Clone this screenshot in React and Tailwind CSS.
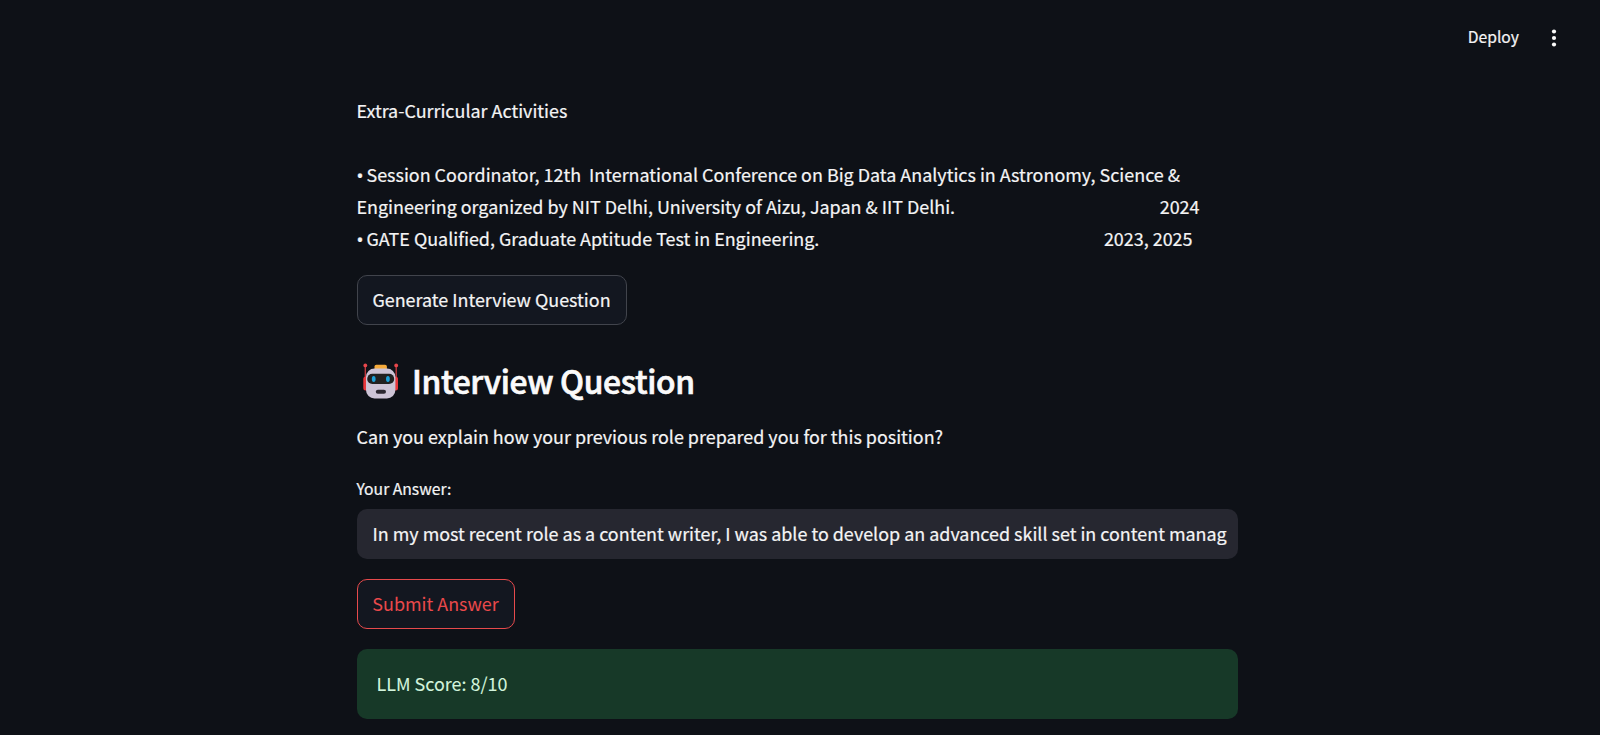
const robotLabel = 'robot';

function Robot() {
  return (
    <svg className="ml-[5px] h-[37px] w-[38px] shrink-0" viewBox="0 0 38 37" role="img" aria-label={robotLabel}>
      <path d="M3.3 3v14M34.2 3v14" stroke="#c93a3f" strokeWidth="1.3" />
      <circle cx="3.3" cy="2.4" r="1.9" fill="#e8474c" />
      <circle cx="34.2" cy="2.4" r="1.9" fill="#e8474c" />
      <rect x="1.3" y="13.5" width="5" height="14" rx="2.5" fill="#e8373c" />
      <rect x="31" y="13.5" width="5" height="14" rx="2.5" fill="#e8373c" />
      <rect x="12.5" y="1.7" width="12.4" height="6" rx="1.8" fill="#f5ab3c" />
      <rect x="4" y="5.6" width="29.4" height="30" rx="8.5" fill="#cdc4d6" />
      <rect x="5.2" y="10.8" width="27" height="10.2" rx="5.1" fill="#212121" />
      <ellipse cx="11.7" cy="16" rx="1.9" ry="3" fill="#1ba0d8" />
      <ellipse cx="25.9" cy="16" rx="1.9" ry="3" fill="#1ba0d8" />
      <rect x="13.8" y="26.7" width="10.2" height="4.1" rx="2.05" fill="#2b2730" />
    </svg>
  );
}

function Bullet() {
  return <span className="inline-block w-[10px] font-['Noto_Sans',sans-serif] text-[18.5px] leading-none">•</span>;
}

export default function App() {
  return (
    <div className="flex h-[735px] w-full flex-col overflow-hidden bg-[#0e1117] font-['Noto_Sans_CJK_SC','Noto_Sans',sans-serif] text-[17.93px] leading-8 text-[#f4f4f5] [-webkit-text-stroke:0.2px]">
      <header className="flex h-[75px] shrink-0 items-center justify-end pr-[43px]">
        <button className="pb-px text-[15.7px] leading-6">Deploy</button>
        <svg className="ml-[32px] h-[18px] w-[6px]" viewBox="0 0 6 18" fill="#fafafa">
          <circle cx="3" cy="2.5" r="2.1" />
          <circle cx="3" cy="9" r="2.1" />
          <circle cx="3" cy="15.5" r="2.1" />
        </svg>
      </header>
      <main className="ml-[357px] flex w-[881px] flex-col items-start pt-[19px]">
        <p className="-ml-[0.5px]">Extra-Curricular Activities</p>
        <div className="-ml-[0.5px] mt-8 w-full whitespace-pre">
          <p className="h-8"><Bullet />Session Coordinator, 12th  International Conference on Big Data Analytics in Astronomy, Science &amp;</p>
          <p className="flex h-8 justify-between pr-[38px]">
            <span>Engineering organized by NIT Delhi, University of Aizu, Japan &amp; IIT Delhi.</span>
            <span>2024</span>
          </p>
          <p className="flex h-8 justify-between pr-[45px]">
            <span><Bullet />GATE Qualified, Graduate Aptitude Test in Engineering.</span>
            <span>2023, 2025</span>
          </p>
        </div>
        <button className="mt-[21px] h-[50px] w-[270px] rounded-[10px] border border-[#41444c] bg-[#131720] pb-0.5 pr-px">
          Generate Interview Question
        </button>
        <h2 className="mt-[34px] flex h-[45px] items-center text-[31.8px] font-medium leading-[45px] text-[#fafafa]">
          <Robot />
          <span className="ml-[12px] pb-[3px] tracking-[-0.34px] [-webkit-text-stroke:0.7px]">Interview Question</span>
        </h2>
        <p className="-ml-[0.5px] mt-4">Can you explain how your previous role prepared you for this position?</p>
        <label className="-ml-[0.5px] mt-[25px] text-[15.7px] leading-6">Your Answer:</label>
        <div className="mt-2 flex h-[50px] w-full items-center overflow-hidden whitespace-nowrap rounded-[10px] bg-[#262730] pb-0.5 pl-[15.5px]">
          In my most recent role as a content writer, I was able to develop an advanced skill set in content manag
        </div>
        <button className="mt-5 h-[50px] w-[158px] rounded-[10px] border border-[#e64a4c] bg-[#131720] pb-0.5 pr-px text-[#ea494b] [-webkit-text-stroke:0px]">
          Submit Answer
        </button>
        <div className="mt-5 flex h-[70px] w-full items-center rounded-[10px] bg-[#173928] pb-0.5 pl-[19.5px] text-[#d3f4dd] [-webkit-text-stroke:0.1px]">
          LLM Score: 8/10
        </div>
      </main>
    </div>
  );
}
